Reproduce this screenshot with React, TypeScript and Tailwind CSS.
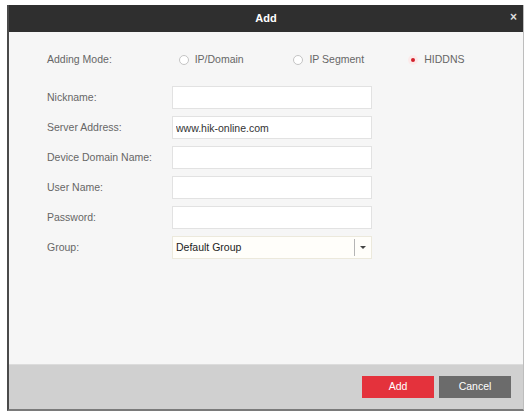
// "Add" device dialog (HIDDNS mode)

import { useState } from "react";

const fields = ["Nickname:", "Server Address:", "Device Domain Name:", "User Name:", "Password:"];

function Radio({ label, checked, onClick }: { label: string; checked: boolean; onClick: () => void }) {
    return (
        <button onClick={onClick} className="flex items-center w-[116px] gap-[6px] text-left">
            {checked ? (
                <span className="w-[10px] h-[10px] rounded-full bg-[#fbeaea] flex items-center justify-center">
                    <span className="w-[4px] h-[4px] rounded-full bg-[#d2202c]" />
                </span>
            ) : (
                <span className="w-[10px] h-[10px] rounded-full border border-[#c4c4c4] bg-white" />
            )}
            <span>{label}</span>
        </button>
    );
}

export default function App() {
    const [mode, setMode] = useState("HIDDNS");
    const [values, setValues] = useState<Record<string, string>>({ "Server Address:": "www.hik-online.com" });

    return (
        <div className="w-[529px] h-[412px] bg-white pt-[5px] pl-[7px] font-['Liberation_Sans',Arial,sans-serif] text-[10.5px] text-[#666]">
            <div className="w-[517px] h-[406px] flex flex-col border-l-2 border-[#4a4a4a] border-r border-r-[#bdbdbd] border-b-2 border-b-[#7a7a7a]">
                {/* title bar */}
                <div className="h-[27px] bg-[#2f2f2f] relative flex items-center justify-center shrink-0">
                    <span className="text-white font-bold text-[11px]">Add</span>
                    <button className="absolute right-[6px] top-[6px] text-[#ddd] font-bold text-[12px] leading-none">×</button>
                </div>

                {/* body */}
                <div className="flex-1 bg-[#f6f6f6] pl-[38px] pt-[21px]">
                    <div className="flex items-center h-[14px]">
                        <span className="w-[133px]">Adding Mode:</span>
                        {["IP/Domain", "IP Segment", "HIDDNS"].map((m) => (
                            <Radio key={m} label={m} checked={mode === m} onClick={() => setMode(m)} />
                        ))}
                    </div>

                    <div className="flex flex-col gap-[7px] mt-[19px]">
                        {fields.map((f) => (
                            <div key={f} className="flex items-center">
                                <span className="w-[125px]">{f}</span>
                                <input
                                    type={f === "Password:" ? "password" : "text"}
                                    value={values[f] ?? ""}
                                    onChange={(e) => setValues({ ...values, [f]: e.target.value })}
                                    className="w-[200px] h-[23px] bg-white border border-[#e2e2e2] px-[3px] text-[#333] outline-none"
                                />
                            </div>
                        ))}
                        <div className="flex items-center">
                            <span className="w-[125px]">Group:</span>
                            <div className="w-[200px] h-[23px] bg-[#fffefa] border border-[#ece9dc] flex items-center">
                                <span className="flex-1 px-[3px] text-[#222]">Default Group</span>
                                <span className="w-px h-[17px] bg-[#b5b5b5]" />
                                <span className="w-[16px] flex justify-center">
                                    <span className="border-x-[3px] border-x-transparent border-t-[3px] border-t-[#444]" />
                                </span>
                            </div>
                        </div>
                    </div>
                </div>

                {/* footer */}
                <div className="h-[45px] bg-[#d0d0d0] flex items-center justify-end gap-[5px] pr-[12px] shrink-0 border-t border-[#dcdcdc]">
                    <button className="w-[72px] h-[22px] bg-[#e4323c] text-white text-[10.5px]">Add</button>
                    <button className="w-[72px] h-[22px] bg-[#6b6b6b] text-white text-[10.5px]">Cancel</button>
                </div>
            </div>
        </div>
    );
}
